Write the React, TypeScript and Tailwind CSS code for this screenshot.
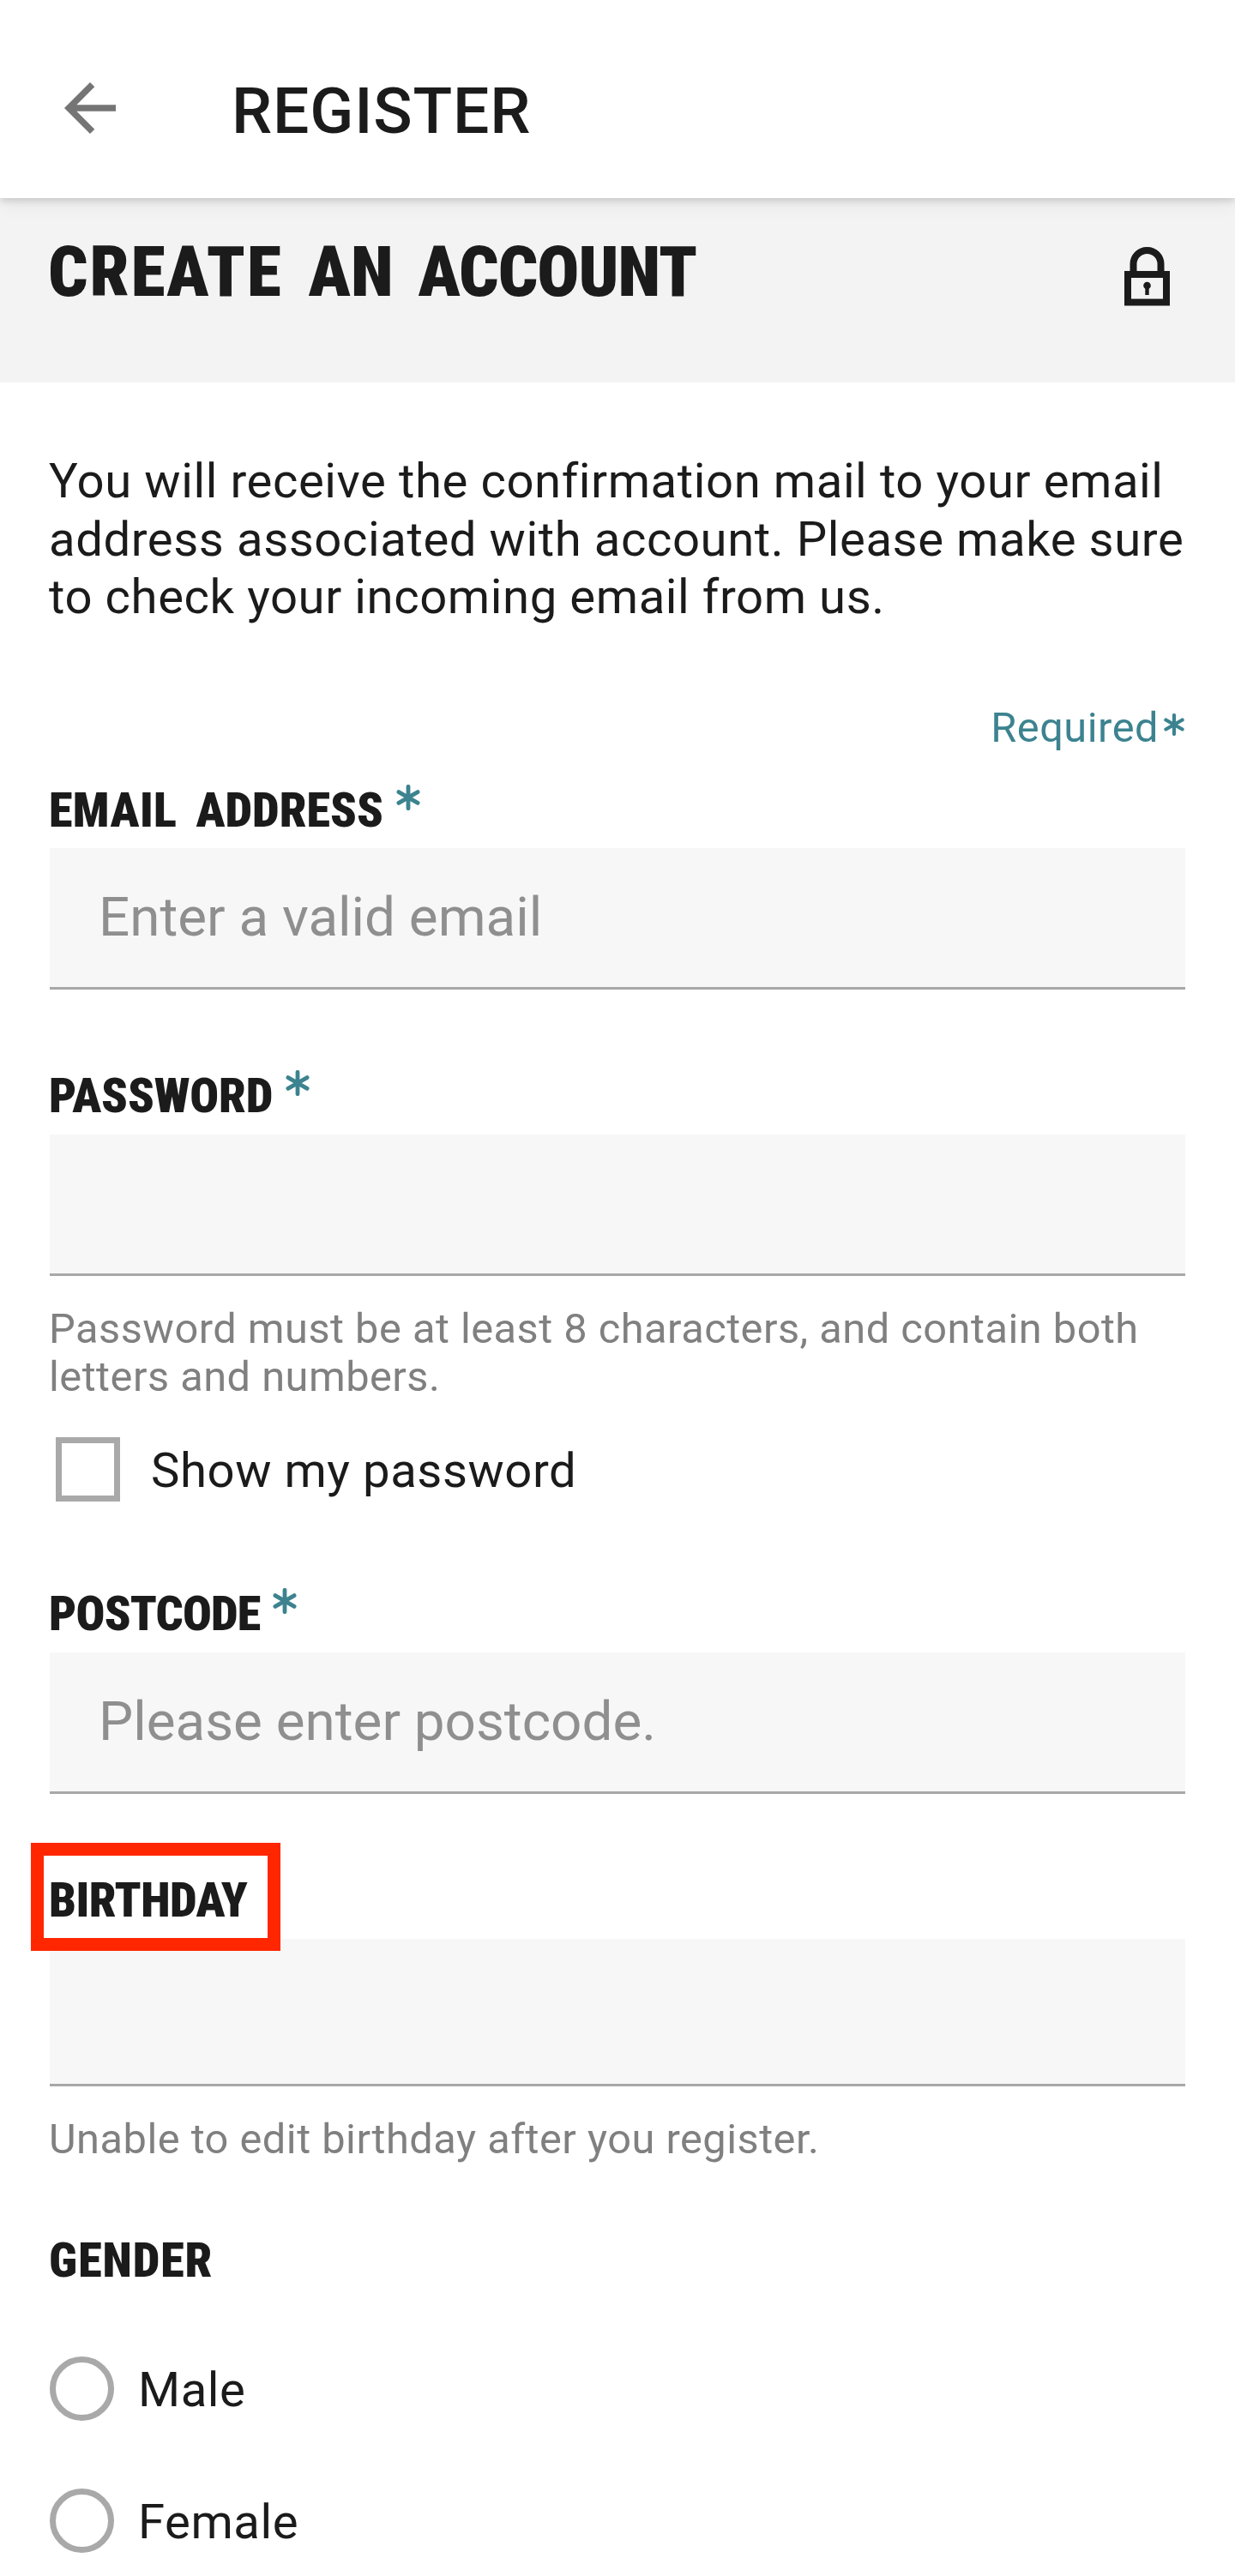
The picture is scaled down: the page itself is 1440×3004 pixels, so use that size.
import type { ReactNode } from "react";

function Asterisk({ className }: { className: string }) {
  return (
    <svg viewBox="-14 -15 28 30" className={className} fill="none" stroke="#3c838f" strokeLinecap="round">
      <path strokeWidth="4.8" d="M0 -12.7V12.7M-11.1 -6.4L11.1 6.4M-11.1 6.4L11.1 -6.4" />
    </svg>
  );
}

function Label({ children, required, className }: { children: ReactNode; required?: boolean; className: string }) {
  return (
    <div className={`-ml-px flex items-start whitespace-nowrap text-[56.25px] leading-[66px] font-black [font-stretch:75%] ${className}`}>
      {children}
      {required && <Asterisk className="mt-[3px] ml-[15px] h-[30px] w-[28px] shrink-0" />}
    </div>
  );
}

function Field({ placeholder, className }: { placeholder?: string; className: string }) {
  return (
    <input
      placeholder={placeholder}
      className={`block w-full rounded-none border-b-[3px] border-[#a8a8a8] bg-[#f7f7f7] pl-[57px] text-[63.75px] outline-none placeholder:text-[#8f8f8f] placeholder:opacity-100 ${className}`}
    />
  );
}

function Helper({ children }: { children: ReactNode }) {
  return (
    <p className="mt-[34px] -mb-px -ml-px text-[48.75px] leading-[56px] tracking-[0.49px] whitespace-nowrap text-[#808080]">
      {children}
    </p>
  );
}

function Radio({ label }: { label: string }) {
  return (
    <label className="mt-[79px] flex h-[75px] items-center">
      <span className="size-[75px] rounded-full border-[7.5px] border-[#a9a9a9]" />
      <span className="mt-[4px] ml-[28px] text-[56.25px] leading-[66px] tracking-[0.56px]">{label}</span>
    </label>
  );
}

export default function App() {
  return (
    <div className="h-[3004px] w-[1440px] overflow-hidden bg-white font-[Roboto,sans-serif] text-[#1b1b1b]">
      <header className="relative flex h-[231px] items-start bg-white pl-[60px] shadow-[0_3px_8px_rgba(0,0,0,0.15),0_8px_20px_rgba(0,0,0,0.05)]">
        <svg viewBox="0 0 24 24" className="mt-[81px] size-[90px] fill-[#757575]">
          <path d="M20 11H7.83l5.59-5.59L12 4l-8 8 8 8 1.41-1.41L7.83 13H20v-2z" />
        </svg>
        <h1 className="mt-[89px] ml-[120px] text-[75px] leading-[80px] font-medium tracking-[0.85px]">REGISTER</h1>
      </header>

      <section className="flex h-[215px] items-start justify-between bg-[#f3f3f3] pt-[41px] pr-[76px] pl-[56px]">
        <h2 className="flex text-[81.5px] leading-[90px] font-black whitespace-nowrap [font-stretch:75%]">
          <span className="tracking-[1.9px]">CREATE</span>
          <span className="ml-[30px]">AN</span>
          <span className="ml-[29px] tracking-[-1px]">ACCOUNT</span>
        </h2>
        <svg viewBox="0 0 53 69" className="mt-[16px] h-[69px] w-[53px]" fill="none" stroke="#1b1b1b" strokeWidth="8">
          <path d="M10.5 30V20a16 16 0 0 1 32 0V30" />
          <rect x="4" y="32" width="45" height="32.5" />
          <circle cx="26.5" cy="45" r="4.3" fill="#1b1b1b" stroke="none" />
          <path strokeWidth="4.4" d="M26.5 45V56" />
        </svg>
      </section>

      <main className="px-[58px] pt-[82px]">
        <p className="-ml-px text-[56.25px] leading-[67.5px] tracking-[0.57px] whitespace-nowrap">
          You will receive the confirmation mail to your email
          <br />
          address associated with account. Please make sure
          <br />
          to check your incoming email from us.
        </p>

        <div className="mt-[89px] flex h-[57px] items-start justify-end text-[#3c838f]">
          <span className="text-[48.75px] leading-[57px] tracking-[0.5px]">Required</span>
          <Asterisk className="mt-[12px] ml-[5px] h-[26px] w-[26px]" />
        </div>

        <Label required className="mt-[35px]">
          <span className="tracking-[0.4px]">EMAIL</span>
          <span className="ml-[22px]">ADDRESS</span>
        </Label>
        <Field placeholder="Enter a valid email" className="mt-[11px] h-[165px]" />

        <Label required className="mt-[91px]">
          <span className="tracking-[-0.2px]">PASSWORD</span>
        </Label>
        <Field className="mt-[12px] h-[165px]" />
        <Helper>
          Password must be at least 8 characters, and contain both
          <br />
          letters and numbers.
        </Helper>
        <label className="mt-[43px] ml-[7px] flex h-[75px] items-center">
          <span className="size-[75px] border-[7px] border-[#a9a9a9]" />
          <span className="mt-[4px] ml-[36px] text-[56.25px] leading-[66px] tracking-[0.56px]">Show my password</span>
        </label>

        <Label required className="mt-[98px]">
          <span className="tracking-[-0.8px]">POSTCODE</span>
        </Label>
        <Field placeholder="Please enter postcode." className="mt-[12px] h-[165px]" />

        <div className="relative mt-[91px]">
          <Label className="">
            <span className="tracking-[-0.55px]">BIRTHDAY</span>
          </Label>
          <div className="absolute -top-[34px] -left-[22.5px] h-[126px] w-[291.5px] border-[15px] border-[#ff2600]" />
        </div>
        <Field className="mt-[12px] h-[172px]" />
        <Helper>Unable to edit birthday after you register.</Helper>

        <Label className="mt-[81px]">
          <span className="tracking-[0.9px]">GENDER</span>
        </Label>
        <Radio label="Male" />
        <Radio label="Female" />
      </main>
    </div>
  );
}
